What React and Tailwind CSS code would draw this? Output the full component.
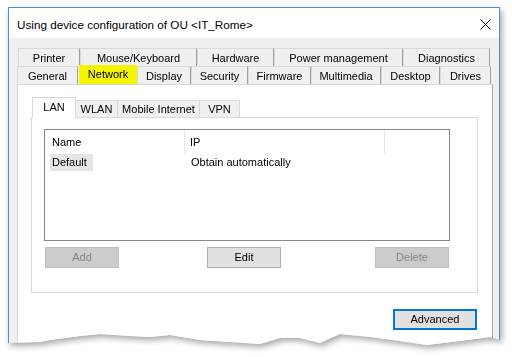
import React from "react";

const backTabs = [
  { label: "Printer", w: 62 },
  { label: "Mouse/Keyboard", w: 117 },
  { label: "Hardware", w: 77 },
  { label: "Power management", w: 129 },
  { label: "Diagnostics", w: 87 },
];

const frontTabs = [
  { label: "General", w: 61 },
  { label: "Network", w: 59, active: true },
  { label: "Display", w: 54 },
  { label: "Security", w: 57 },
  { label: "Firmware", w: 63 },
  { label: "Multimedia", w: 70 },
  { label: "Desktop", w: 59 },
  { label: "Drives", w: 51 },
];

const innerTabs = [
  { label: "LAN", w: 44, active: true },
  { label: "WLAN", w: 42 },
  { label: "Mobile Internet", w: 82 },
  { label: "VPN", w: 40 },
];

function OuterTab({ label, w, active }) {
  if (active) {
    return (
      <div
        style={{ width: w }}
        className="-mt-[1px] flex h-[19px] shrink-0 items-center justify-center border-l border-white bg-[#f5f500] pb-[1px] text-black"
      >
        {label}
      </div>
    );
  }
  return (
    <div
      style={{ width: w }}
      className="flex h-[18px] shrink-0 items-center justify-center border-l border-t border-r border-[#d9d9d9] border-r-[#a0a0a0] bg-[#f0f0f0] pt-[1px] text-black"
    >
      {label}
    </div>
  );
}

function InnerTab({ label, w, active }) {
  if (active) {
    return (
      <div
        style={{ width: w }}
        className="relative z-10 -mb-[1px] flex h-[21px] shrink-0 items-center justify-center border-l border-t border-r border-[#d9d9d9] bg-white pb-[2px]"
      >
        {label}
      </div>
    );
  }
  return (
    <div
      style={{ width: w }}
      className="mt-[3px] flex h-[17px] shrink-0 items-center justify-center border-t border-r border-[#d9d9d9] bg-[#f0f0f0]"
    >
      {label}
    </div>
  );
}

function Button({ children, disabled, focused, className = "" }) {
  let look = "border border-[#adadad] bg-[#e1e1e1] text-black";
  if (disabled) look = "border border-[#bfbfbf] bg-[#cccccc] text-[#838383]";
  if (focused) look = "border-2 border-[#0078d7] bg-[#e1e1e1] text-black";
  return (
    <div className={`flex h-[21px] w-[74px] shrink-0 items-center justify-center ${look} ${className}`}>
      {children}
    </div>
  );
}

export default function App() {
  return (
    <div className="h-[357px] w-[512px] overflow-hidden bg-white pl-[8px] pt-[7px] font-['Liberation_Sans',Arial,sans-serif] text-[11px] text-black">
      <div className="w-[492px] drop-shadow-[2px_3px_3px_rgba(0,0,0,0.35)]">
        <div className="flex h-[340px] flex-col border border-[#4a90d9] bg-[#f0f0f0] [clip-path:polygon(0_0,100%_0,100%_333px,482px_330px,452px_334px,419px_338px,392px_334px,362px_330px,332px_327px,312px_336px,292px_331px,272px_331px,252px_337px,192px_333px,162px_328px,142px_330px,122px_329px,92px_327px,72px_329px,42px_333px,32px_335px,0_336px)]">
          {/* title bar */}
          <div className="flex h-[30px] shrink-0 items-center justify-between bg-white pl-[8px] pr-[8px]">
            <span className="pt-[3px] text-[11.7px]">Using device configuration of OU &lt;IT_Rome&gt;</span>
            <svg width="11" height="11" viewBox="0 0 11 11" className="mt-[2px]">
              <path d="M0.5 0.5L10.5 10.5M10.5 0.5L0.5 10.5" stroke="#000" strokeWidth="1" />
            </svg>
          </div>

          {/* body */}
          <div className="flex flex-1 flex-col pl-[8px] pr-[6px] pt-[10px]">
            <div className="flex pl-[1px]">
              {backTabs.map((t) => (
                <OuterTab key={t.label} {...t} />
              ))}
            </div>
            <div className="flex">
              {frontTabs.map((t) => (
                <OuterTab key={t.label} {...t} />
              ))}
            </div>

            {/* outer tab page */}
            <div className="flex flex-1 flex-col border-l border-t border-r border-[#d9d9d9] border-r-[#a0a0a0] bg-white pl-[13px] pr-[14px] pt-[12px]">
              <div className="flex pl-[1px]">
                {innerTabs.map((t) => (
                  <InnerTab key={t.label} {...t} />
                ))}
              </div>

              <div className="flex h-[176px] flex-col border border-[#d9d9d9] pl-[12px] pr-[27px] pt-[11px]">
                {/* list */}
                <div className="h-[112px] border border-[#828790] bg-white">
                  <div className="flex h-[24px] items-stretch pt-[1px]">
                    <div className="flex w-[140px] items-center border-r border-[#e5e5e5] pl-[7px]">Name</div>
                    <div className="flex w-[200px] items-center border-r border-[#e5e5e5] pl-[5px]">IP</div>
                  </div>
                  <div className="flex h-[17px] items-center">
                    <div className="ml-[5px] flex h-[17px] w-[43px] items-center bg-[#e5e5e5] pl-[2px]">Default</div>
                    <div className="ml-[98px]">Obtain automatically</div>
                  </div>
                </div>

                {/* buttons */}
                <div className="mt-[6px] flex pl-[1px]">
                  <Button disabled>Add</Button>
                  <Button className="ml-[88px]">Edit</Button>
                  <Button disabled className="ml-[94px]">Delete</Button>
                </div>
              </div>

              <div className="mt-[16px] flex justify-end pr-[1px]">
                <Button focused className="w-[84px]">Advanced</Button>
              </div>
            </div>
          </div>
        </div>
      </div>
    </div>
  );
}
